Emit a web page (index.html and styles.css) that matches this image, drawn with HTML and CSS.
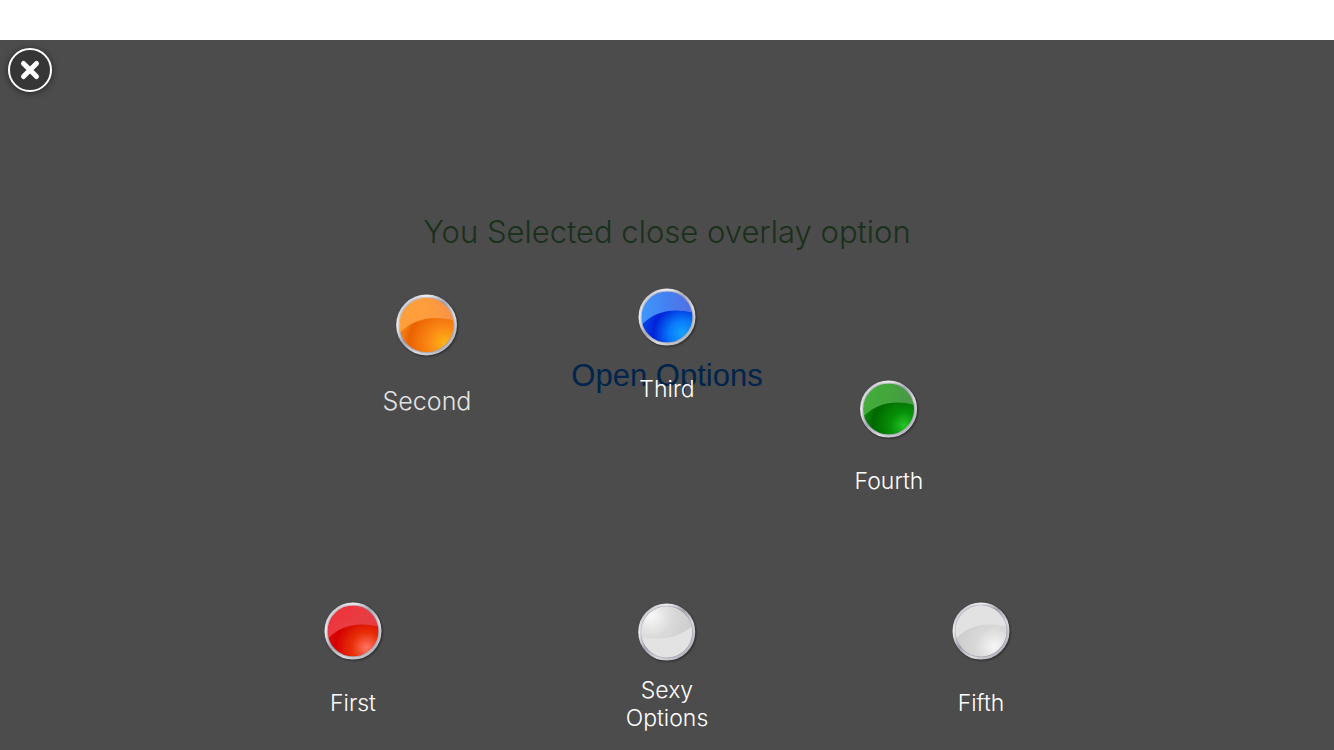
FILE: index.html
```
<!DOCTYPE html>
<html lang="en">
<head>
<meta charset="utf-8">
<meta name="viewport" content="width=device-width, initial-scale=1">
<title>Options</title>
<link rel="stylesheet" href="styles.css">
</head>
<body>
<svg class="defs" aria-hidden="true">
  <defs>
    <linearGradient id="rim" x1="0" y1="0" x2="1" y2="1">
      <stop offset="0" stop-color="#aaaab4"/><stop offset=".25" stop-color="#eeeef2"/><stop offset=".45" stop-color="#a8a8b4"/><stop offset=".65" stop-color="#dadae0"/><stop offset="1" stop-color="#a4a4ae"/>
    </linearGradient>
    <radialGradient id="orange" cx=".82" cy=".82" r=".75"><stop offset="0" stop-color="#ffb416"/><stop offset=".4" stop-color="#fa8615"/><stop offset=".85" stop-color="#ea6200"/><stop offset="1" stop-color="#f27a10"/></radialGradient>
    <radialGradient id="blue" cx=".8" cy=".82" r=".75"><stop offset="0" stop-color="#14a2ff"/><stop offset=".35" stop-color="#0878fa"/><stop offset=".75" stop-color="#0022d8"/><stop offset="1" stop-color="#0040e8"/></radialGradient>
    <radialGradient id="green" cx=".8" cy=".82" r=".75"><stop offset="0" stop-color="#24c428"/><stop offset=".35" stop-color="#079008"/><stop offset=".8" stop-color="#006800"/><stop offset="1" stop-color="#088008"/></radialGradient>
    <radialGradient id="red" cx=".76" cy=".82" r=".75"><stop offset="0" stop-color="#ff7462"/><stop offset=".38" stop-color="#e83008"/><stop offset=".8" stop-color="#d40000"/><stop offset="1" stop-color="#dc0808"/></radialGradient>
    <radialGradient id="silver" cx=".76" cy=".8" r=".75"><stop offset="0" stop-color="#f6f6f6"/><stop offset=".5" stop-color="#d8d8d8"/><stop offset="1" stop-color="#cccccc"/></radialGradient>
    <radialGradient id="silver-top" cx=".2" cy=".2" r=".8"><stop offset="0" stop-color="#f8f8f8"/><stop offset=".5" stop-color="#dadada"/><stop offset="1" stop-color="#cccccc"/></radialGradient>
    <linearGradient id="gloss-orange" x1="0" y1="0" x2="1" y2="0"><stop offset="0" stop-color="#ffa03a"/><stop offset=".5" stop-color="#ff9d3c"/><stop offset="1" stop-color="#f78f4b"/></linearGradient>
    <linearGradient id="gloss-blue" x1="0" y1="0" x2="1" y2="0"><stop offset="0" stop-color="#3c9cff"/><stop offset=".5" stop-color="#4480f2"/><stop offset="1" stop-color="#566ce2"/></linearGradient>
    <linearGradient id="gloss-green" x1="0" y1="0" x2="1" y2="0"><stop offset="0" stop-color="#44ae3c"/><stop offset=".5" stop-color="#42a63c"/><stop offset="1" stop-color="#4c924a"/></linearGradient>
    <linearGradient id="gloss-red" x1="0" y1="0" x2="1" y2="1"><stop offset="0" stop-color="#f42c34"/><stop offset=".5" stop-color="#e93c42"/><stop offset="1" stop-color="#da4040"/></linearGradient>
    <clipPath id="face"><circle cx="30" cy="30" r="26"/></clipPath>
    <path id="arch" d="M0 43C14 25 34 19 60 27V0H0Z" clip-path="url(#face)"/>
    <path id="bowl" d="M0 34C22 40 43 37 60 20V60H0Z" clip-path="url(#face)"/>
    <g id="frame"><circle cx="30" cy="30" r="27" fill="none" stroke="url(#rim)" stroke-width="3"/><circle cx="30" cy="30" r="26" fill="none" stroke="#77778a" stroke-opacity=".3" stroke-width="1"/></g>
  </defs>
</svg>
<main class="page">
  <h1 class="message">You Selected close overlay option</h1>
  <a class="open" href="#options">Open Options</a>
  <nav class="overlay" id="options" aria-label="Options">
    <button class="close" type="button" aria-label="Close">
      <svg viewBox="0 0 44 44" aria-hidden="true"><circle cx="22" cy="22" r="21" fill="#363636" stroke="#fff" stroke-width="2"/><path d="M15.500 15.500 28.500 28.500M28.500 15.500 15.500 28.500" stroke="#fff" stroke-width="5" stroke-linecap="round"/></svg>
    </button>
    <button class="option second" type="button">
      <svg class="orb" viewBox="0 0 60 60" aria-hidden="true"><circle cx="30" cy="30" r="26" fill="url(#orange)"/><use href="#arch" fill="url(#gloss-orange)"/><use href="#frame"/></svg>
      <span class="label">Second</span>
    </button>
    <button class="option third" type="button">
      <svg class="orb" viewBox="0 0 60 60" aria-hidden="true"><circle cx="30" cy="30" r="26" fill="url(#blue)"/><use href="#arch" fill="url(#gloss-blue)"/><use href="#frame"/></svg>
      <span class="label">Third</span>
    </button>
    <button class="option fourth" type="button">
      <svg class="orb" viewBox="0 0 60 60" aria-hidden="true"><circle cx="30" cy="30" r="26" fill="url(#green)"/><use href="#arch" fill="url(#gloss-green)"/><use href="#frame"/></svg>
      <span class="label">Fourth</span>
    </button>
    <button class="option first" type="button">
      <svg class="orb" viewBox="0 0 60 60" aria-hidden="true"><circle cx="30" cy="30" r="26" fill="url(#red)"/><use href="#arch" fill="url(#gloss-red)"/><use href="#frame"/></svg>
      <span class="label">First</span>
    </button>
    <button class="option hub" type="button">
      <svg class="orb" viewBox="0 0 60 60" aria-hidden="true"><circle cx="30" cy="30" r="26" fill="url(#silver-top)"/><use href="#bowl" fill="#e3e3e3"/><use href="#frame"/></svg>
      <span class="label">Sexy<br>Options</span>
    </button>
    <button class="option fifth" type="button">
      <svg class="orb" viewBox="0 0 60 60" aria-hidden="true"><circle cx="30" cy="30" r="26" fill="url(#silver)"/><use href="#arch" fill="#e2e2e2"/><use href="#frame"/></svg>
      <span class="label">Fifth</span>
    </button>
  </nav>
</main>
</body>
</html>
```
FILE: styles.css
```
* { box-sizing: border-box; }
body {
  margin: 0;
  padding-top: 40px;
  min-height: 100vh;
  display: flex;
  background: #fff;
  font-family: Inter, "Liberation Sans", sans-serif;
  font-weight: 300;
}
.defs { position: absolute; width: 0; height: 0; }
.page {
  position: relative;
  flex: 1;
  display: flex;
  flex-direction: column;
  align-items: center;
  gap: 104px;
  padding-top: 172px;
}
.message {
  margin: 0;
  font-size: 31px;
  line-height: 40px;
  font-weight: 300;
  color: #57a05a;
}
.open {
  font-family: "Liberation Sans", Arial, sans-serif;
  font-size: 31px;
  line-height: 40px;
  font-weight: 400;
  color: #007aff;
  text-decoration: none;
}
.overlay {
  position: absolute;
  inset: 0;
  background: rgba(0, 0, 0, 0.7);
}
button {
  padding: 0;
  border: 0;
  background: none;
  color: #fff;
  font: inherit;
  cursor: pointer;
}
.close {
  position: absolute;
  top: 8px;
  left: 8px;
  width: 44px;
  height: 44px;
  border-radius: 50%;
  box-shadow: 0 1px 7px rgba(0, 0, 0, 0.5);
}
.close svg { display: block; }
.option {
  position: absolute;
  display: flex;
  flex-direction: column;
  align-items: center;
  gap: 28px;
  transform: translateX(-50%);
  font-size: 23px;
  line-height: 28px;
}
.orb {
  width: 60px;
  height: 60px;
  filter: drop-shadow(1px 1px 1px rgba(0, 0, 0, 0.45));
}
.second { left: calc(50% - 240px); top: calc(100% - 457px); gap: 30px; font-size: 25px; color: #e4e4e4; }
.second .orb { width: 64px; height: 64px; }
.third { left: 50%; top: calc(100% - 463px); }
.fourth { left: calc(50% + 222px); top: calc(100% - 371px); }
.first { left: calc(50% - 314px); top: calc(100% - 149px); }
.hub { left: 50%; top: calc(100% - 148px); gap: 14px; }
.fifth { left: calc(50% + 314px); top: calc(100% - 149px); }
```
